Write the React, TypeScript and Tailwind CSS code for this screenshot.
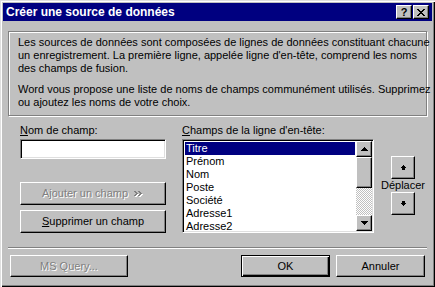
import React from "react";

const raised =
  "bg-[#c0c0c0] border border-t-white border-l-white border-r-black border-b-black shadow-[inset_-1px_-1px_0_#808080]";
const sunken =
  "border border-t-[#808080] border-l-[#808080] border-r-white border-b-white shadow-[inset_1px_1px_0_#000,inset_-1px_-1px_0_#dfdfdf]";
const disabledText = "text-[#808080] [text-shadow:1px_1px_0_#fff]";

const fields = ["Titre", "Prénom", "Nom", "Poste", "Société", "Adresse1", "Adresse2"];

// petites flèches en pixels (style Marlett)
function Pixels({ rows, color = "#000" }: { rows: number[][]; color?: string }) {
  const w = Math.max(...rows.map((r) => r[1] + 1));
  return (
    <svg width={w} height={rows.length} shapeRendering="crispEdges">
      {rows.map(([a, b], i) => (
        <rect key={i} x={a} y={i} width={b - a + 1} height={1} fill={color} />
      ))}
    </svg>
  );
}

const scrollUp = [[3, 3], [2, 4], [1, 5], [0, 6]];
const scrollDown = [[0, 6], [1, 5], [2, 4], [3, 3]];
const moveUp = [[2, 2], [1, 3], [0, 4], [1, 3], [1, 3]];
const moveDown = [[1, 3], [1, 3], [0, 4], [1, 3], [2, 2]];

function CloseGlyph() {
  const rects = [];
  for (let r = 0; r < 7; r++) {
    rects.push(<rect key={"a" + r} x={r} y={r} width={2} height={1} fill="#000" />);
    rects.push(<rect key={"b" + r} x={6 - r} y={r} width={2} height={1} fill="#000" />);
  }
  return (
    <svg width={8} height={7} shapeRendering="crispEdges">
      {rects}
    </svg>
  );
}

function Chevrons() {
  const chev = (ox: number, oy: number, c: string) =>
    [[0, 1], [1, 2], [2, 3], [1, 2], [0, 1]].map(([a, b], i) => (
      <rect key={c + ox + i} x={ox + a} y={oy + i} width={b - a + 1} height={1} fill={c} />
    ));
  return (
    <svg width={10} height={6} shapeRendering="crispEdges">
      {chev(1, 1, "#fff")}
      {chev(5, 1, "#fff")}
      {chev(0, 0, "#808080")}
      {chev(4, 0, "#808080")}
    </svg>
  );
}

export default function App() {
  return (
    <div className="w-[435px] h-[287px] bg-[#c0c0c0] p-[3px] flex flex-col text-[11px] leading-[13px] text-black font-['Liberation_Sans',Arial,sans-serif] shadow-[inset_1px_1px_0_#dfdfdf,inset_2px_2px_0_#fff,inset_-1px_-1px_0_#000,inset_-2px_-2px_0_#808080]">
      {/* barre de titre */}
      <div className="h-[18px] bg-[#000080] flex items-center pl-[3px] pr-[3px]">
        <span className="flex-1 text-white font-bold text-[12px] whitespace-nowrap">
          Créer une source de données
        </span>
        <div className="flex gap-[1px]">
          <div className={`${raised} w-[16px] h-[14px] flex items-center justify-center font-bold text-[11px] leading-none`}>
            ?
          </div>
          <div className={`${raised} w-[16px] h-[14px] flex items-center justify-center`}>
            <CloseGlyph />
          </div>
        </div>
      </div>

      <div className="flex-1 px-[5px] flex flex-col">
        {/* texte d'intro */}
        <div className="mt-[10px] h-[85px] border border-[#808080] shadow-[1px_1px_0_#fff,inset_1px_1px_0_#fff] pl-[9px] pt-[4px] whitespace-nowrap">
          <p>
            Les sources de données sont composées de lignes de données constituant chacune
            <br />
            un enregistrement. La première ligne, appelée ligne d'en-tête, comprend les noms
            <br />
            des champs de fusion.
          </p>
          <p className="mt-[8px]">
            Word vous propose une liste de noms de champs communément utilisés. Supprimez
            <br />
            ou ajoutez les noms de votre choix.
          </p>
        </div>

        <div className="mt-[8px] flex">
          {/* colonne gauche */}
          <div className="ml-[12px] w-[146px] flex flex-col">
            <div>
              <span className="underline">N</span>om de champ:
            </div>
            <div className={`${sunken} mt-[2px] h-[20px] bg-white`} />
            <div className={`${raised} mt-[23px] h-[23px] flex items-center justify-center gap-[6px] ${disabledText}`}>
              <span>Ajouter un champ</span>
              <Chevrons />
            </div>
            <div className={`${raised} mt-[5px] h-[23px] flex items-center justify-center`}>
              <span>
                <span className="underline">S</span>upprimer un champ
              </span>
            </div>
          </div>

          {/* liste */}
          <div className="ml-[16px] flex flex-col">
            <div>
              <span className="underline">C</span>hamps de la ligne d'en-tête:
            </div>
            <div className={`${sunken} mt-[2px] w-[192px] h-[94px] bg-white flex p-[1px]`}>
              <div className="flex-1 pt-[1px] pl-[1px] pr-[1px] overflow-hidden">
                {fields.map((f, i) => (
                  <div
                    key={f}
                    className={
                      i === 0
                        ? "h-[13px] pl-[1px] bg-[#000080] text-white"
                        : "h-[13px] pl-[1px]"
                    }
                  >
                    {f}
                  </div>
                ))}
              </div>
              <div className="w-[16px] flex flex-col">
                <div className={`${raised} h-[16px] flex items-center justify-center`}>
                  <Pixels rows={scrollUp} />
                </div>
                <div className={`${raised} h-[31px]`} />
                <div className="flex-1 bg-[repeating-conic-gradient(#fff_0%_25%,#c0c0c0_0%_50%)] bg-[length:2px_2px]" />
                <div className={`${raised} h-[16px] flex items-center justify-center`}>
                  <Pixels rows={scrollDown} />
                </div>
              </div>
            </div>
          </div>

          {/* déplacer */}
          <div className="ml-[8px] w-[42px] mt-[32px] flex flex-col items-center">
            <div className={`${raised} w-[24px] h-[23px] flex items-center justify-center`}>
              <Pixels rows={moveUp} />
            </div>
            <div className="h-[13px] leading-[13px]">Déplacer</div>
            <div className={`${raised} w-[24px] h-[23px] flex items-center justify-center`}>
              <Pixels rows={moveDown} />
            </div>
          </div>
        </div>

        {/* séparateur */}
        <div className="mt-[14px] h-[2px] border-t border-t-[#808080] border-b border-b-white" />

        <div className="mt-[6px] flex gap-[6px]">
          <div className={`${raised} ml-[2px] w-[118px] h-[22px] flex items-center justify-center ${disabledText}`}>
            MS Query...
          </div>
          <div className="ml-auto w-[89px] h-[22px] bg-[#c0c0c0] border border-black shadow-[inset_1px_1px_0_#fff,inset_-1px_-1px_0_#000,inset_-2px_-2px_0_#808080] flex items-center justify-center">
            OK
          </div>
          <div className={`${raised} mr-[2px] w-[89px] h-[22px] flex items-center justify-center`}>
            Annuler
          </div>
        </div>
      </div>
    </div>
  );
}
